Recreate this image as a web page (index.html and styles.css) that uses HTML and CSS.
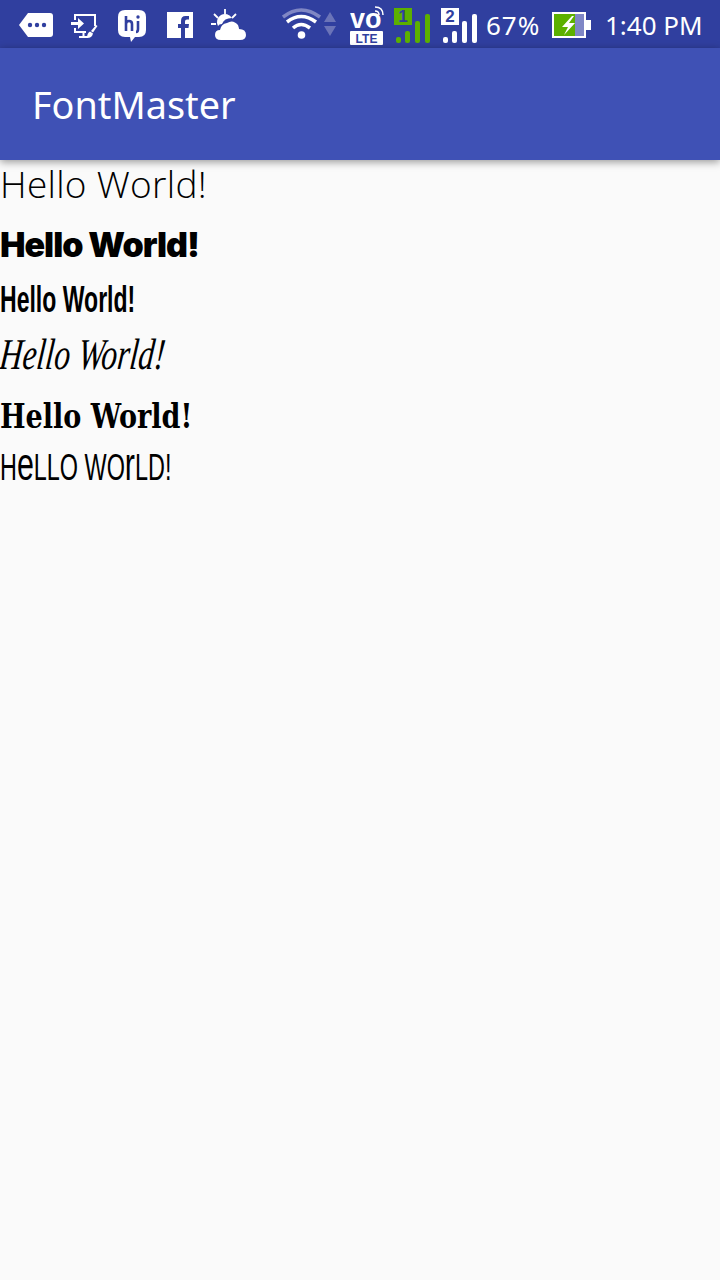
FILE: index.html
```html
<!DOCTYPE html>
<html lang="en">
<head>
    <meta charset="UTF-8">
    <meta name="viewport" content="width=device-width, initial-scale=1.0">
    <title>FontMaster</title>
    <link rel="stylesheet" href="styles.css">
</head>
<body>

    <!-- Status bar -->
    <div class="status-bar">
        <svg class="icon icon-msg" width="34" height="26" viewBox="0 0 34 26">
            <path d="M9 1H31Q34 1 34 4V22Q34 25 31 25H9L0 13Z" fill="#fff"/>
            <circle cx="11" cy="13" r="2.2" fill="#303f9f"/>
            <circle cx="18" cy="13" r="2.2" fill="#303f9f"/>
            <circle cx="25" cy="13" r="2.2" fill="#303f9f"/>
        </svg>
        <svg class="icon icon-cast" width="27" height="26" viewBox="0 0 27 26">
            <path d="M4 7V2H24V13M15 19H4V15" fill="none" stroke="#fff" stroke-width="2"/>
            <path d="M0 9H7V5L13 10.500L7 16V12H0Z" fill="#fff"/>
            <path d="M8 24H17M12.500 19V24" stroke="#fff" stroke-width="2"/>
            <path d="M20 18L25 12L26.500 13L22 19.500Z" fill="#fff"/>
            <path d="M16 25Q16 20 19 18.500L22 20.500Q21 25 16 25Z" fill="#fff"/>
        </svg>
        <svg class="icon icon-hi" width="28" height="32" viewBox="0 0 28 32">
            <path d="M7 0H21Q28 0 28 7V20Q28 27 21 27H17L13 32L12 27H7Q0 27 0 20V7Q0 0 7 0Z" fill="#fff"/>
            <path d="M8 6V21M8 14Q8 11 11 11Q14 11 14 14V21" fill="none" stroke="#303f9f" stroke-width="2.600"/>
            <path d="M20 11V19Q20 22 18 22" fill="none" stroke="#303f9f" stroke-width="2.600"/>
            <circle cx="20" cy="7" r="1.700" fill="#303f9f"/>
        </svg>
        <svg class="icon icon-fb" width="26" height="26" viewBox="0 0 26 26">
            <path d="M0 0H26V26H18V16H21.500L22 12H18V9.500Q18 7.500 20 7.500H22V4H18.500Q14 4 14 9V12H11V16H14V26H0Z" fill="#fff"/>
        </svg>
        <svg class="icon icon-weather" width="36" height="32" viewBox="0 0 36 32">
            <path d="M14 0V5M3 5L7 9M25 5L21 9M0 15H5" stroke="#fff" stroke-width="1.800" fill="none"/>
            <path d="M7 17A8 8 0 0 1 21 9Q13 9 11 15Q8 15 7 17Z" fill="#fff"/>
            <path d="M10 31Q4 31 4 26Q4 21 9 21Q10 15 16 14Q22 10 27 16Q28 19 28 20Q35 20 35 26Q35 31 29 31Z" fill="#fff"/>
        </svg>
        <svg class="icon icon-wifi" width="54" height="32" viewBox="0 0 54 32">
            <path d="M1 9Q19 -5 38 9" fill="none" stroke="#8087c4" stroke-width="3.500"/>
            <path d="M5 14Q19 3 34 14" fill="none" stroke="#fff" stroke-width="3.500"/>
            <path d="M11 20Q19 13 28 20" fill="none" stroke="#fff" stroke-width="3.500"/>
            <circle cx="19.500" cy="27" r="3.800" fill="#fff"/>
            <path d="M48 4L54 14H42Z" fill="#6b74b8"/>
            <path d="M42 18H54L48 28Z" fill="#6b74b8"/>
        </svg>
        <svg class="icon icon-volte" width="36" height="40" viewBox="0 0 36 40">
            <text x="0" y="23" class="volte-vo">vo</text>
            <path d="M25 6Q29 6 29 10M25 2Q33 2 33 10" fill="none" stroke="#fff" stroke-width="1.500"/>
            <rect x="0" y="26" width="33" height="14" rx="1" fill="#fff"/>
            <text x="16.500" y="37.500" class="volte-lte">LTE</text>
        </svg>
        <svg class="icon icon-sim1" width="37" height="36" viewBox="0 0 37 36">
            <rect x="0" y="0" width="18" height="17" fill="#5cb000"/>
            <text x="9" y="14" class="sim-num">1</text>
            <rect x="2" y="29" width="5" height="6" rx="2" fill="#5cb000"/>
            <rect x="11" y="23" width="5" height="12" rx="2" fill="#5cb000"/>
            <rect x="21" y="13" width="5" height="22" rx="2" fill="#5cb000"/>
            <rect x="31" y="6" width="5" height="29" rx="2" fill="#5cb000"/>
        </svg>
        <svg class="icon icon-sim2" width="37" height="36" viewBox="0 0 37 36">
            <rect x="0" y="0" width="18" height="17" fill="#fff"/>
            <text x="9" y="14" class="sim-num">2</text>
            <rect x="2" y="29" width="5" height="6" rx="2" fill="#fff"/>
            <rect x="11" y="23" width="5" height="12" rx="2" fill="#fff"/>
            <rect x="21" y="13" width="5" height="22" rx="2" fill="#fff"/>
            <rect x="31" y="6" width="5" height="29" rx="2" fill="#fff"/>
        </svg>
        <span class="status-text status-pct">67%</span>
        <svg class="icon icon-battery" width="39" height="26" viewBox="0 0 39 26">
            <rect x="1" y="1" width="32" height="24" fill="#7f87c6" stroke="#fff" stroke-width="2"/>
            <rect x="2" y="2" width="21" height="22" fill="#5cb000"/>
            <rect x="34" y="8" width="5" height="10" fill="#fff"/>
            <path d="M20 4L10 15H16L12 23L23 11H17L22 4Z" fill="#fff"/>
        </svg>
        <span class="status-text status-time">1:40 PM</span>
    </div>

    <!-- App bar -->
    <div class="app-bar">
        <span class="app-title">FontMaster</span>
    </div>

    <!-- Font samples -->
    <div class="font-list">
        <p class="sample sample-light">Hello World!</p>
        <p class="sample sample-black">Hello World!</p>
        <p class="sample sample-narrow">Hello World!</p>
        <p class="sample sample-script">Hello World!</p>
        <p class="sample sample-serif">Hello World!</p>
        <p class="sample sample-unicase">H<span class="low">e</span>llo Wo<span class="low">r</span>ld!</p>
    </div>

</body>
</html>
```

FILE: styles.css
```css
html, body {
    margin: 0;
    padding: 0;
}
body {
    width: 720px;
    height: 1280px;
    overflow: hidden;
    background-color: #fafafa;
    font-family: "Noto Sans", sans-serif;
    color: #000;
}

/* status bar */
.status-bar {
    height: 48px;
    background-color: #303f9f;
    display: flex;
    align-items: flex-start;
    color: #fff;
}
.icon {
    display: block;
    flex: none;
}
.icon-msg { margin: 12px 0 0 19px; }
.icon-cast { margin: 13px 0 0 18px; }
.icon-hi { margin: 10px 0 0 20px; }
.icon-fb { margin: 12px 0 0 21px; }
.icon-weather { margin: 9px 0 0 18px; }
.icon-wifi { margin: 8px 0 0 35px; }
.icon-volte { margin: 5px 0 0 14px; }
.icon-sim1 { margin: 8px 0 0 8px; }
.icon-sim2 { margin: 8px 0 0 10px; }
.icon-battery { margin: 12px 0 0 10px; }
.volte-vo {
    font-family: "Liberation Sans", sans-serif;
    font-weight: 700;
    font-size: 27px;
    fill: #fff;
}
.volte-lte {
    font-family: "Liberation Sans", sans-serif;
    font-weight: 700;
    font-size: 12px;
    text-anchor: middle;
    fill: #303f9f;
}
.sim-num {
    font-family: "Liberation Sans", sans-serif;
    font-weight: 700;
    font-size: 17px;
    text-anchor: middle;
    fill: #303f9f;
}
.status-text {
    font-size: 26px;
    line-height: 50px;
    white-space: nowrap;
}
.status-pct {
    margin-left: 8px;
    width: 56px;
    letter-spacing: 1px;
}
.status-time { margin-left: 14px; }

/* app bar */
.app-bar {
    height: 112px;
    background-color: #3f51b5;
    box-shadow: 0 2px 8px rgba(0, 0, 0, 0.4);
    display: flex;
    align-items: center;
    padding-left: 32px;
    position: relative;
}
.app-title {
    color: #fff;
    font-size: 37.8px;
}

/* samples */
.font-list {
    display: flex;
    flex-direction: column;
    align-items: flex-start;
}
.sample {
    margin: 0;
    white-space: nowrap;
    transform-origin: left center;
}
.sample-light {
    font-family: "Open Sans", sans-serif;
    font-weight: 300;
    font-size: 37px;
    letter-spacing: 0.3px;
    line-height: 48px;
}
.sample-black {
    font-family: Inter, sans-serif;
    font-weight: 900;
    font-size: 34px;
    letter-spacing: -1px;
    line-height: 58px;
    margin-top: 8px;
}
.sample-narrow {
    font-family: "Liberation Sans", sans-serif;
    font-weight: 700;
    font-size: 36px;
    line-height: 52px;
    transform: scaleX(0.64);
}
.sample-script {
    font-family: "Liberation Serif", serif;
    font-style: italic;
    font-size: 44px;
    line-height: 58px;
    transform: scaleX(0.72) skewX(-8deg);
}
.sample-serif {
    font-family: "DejaVu Serif", serif;
    font-weight: 700;
    font-size: 33px;
    line-height: 66px;
    transform: scaleX(0.82);
}
.sample-unicase {
    font-family: "Liberation Sans", sans-serif;
    font-size: 36px;
    line-height: 36px;
    text-transform: uppercase;
    transform: scaleX(0.65);
}
.low {
    font-size: 1.3em;
    line-height: 0;
    text-transform: none;
}
```
